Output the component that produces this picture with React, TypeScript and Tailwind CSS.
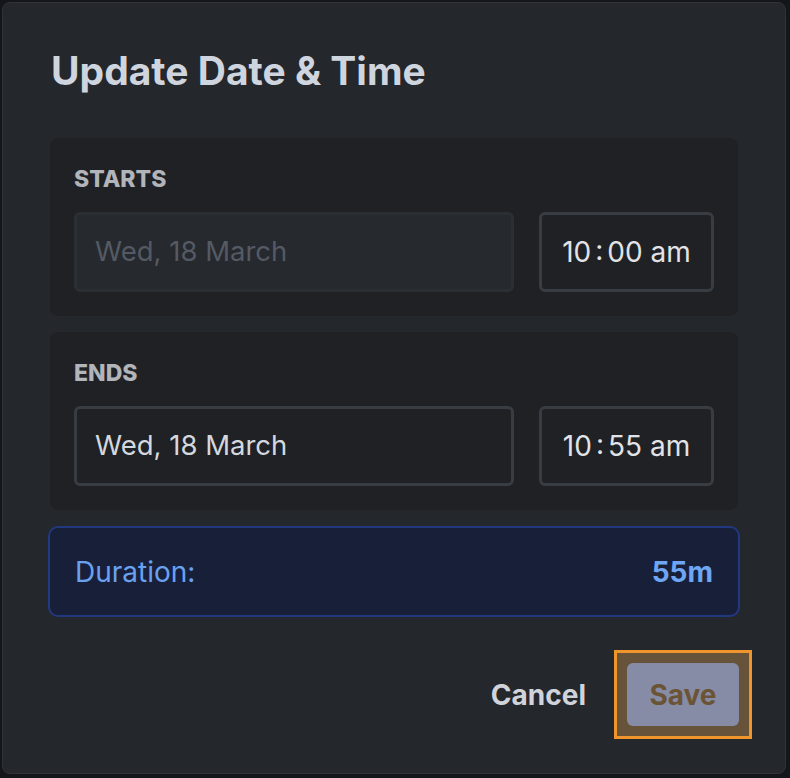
import type { FC } from 'react';

const font = { fontFamily: 'Inter, "Noto Sans", sans-serif' };

const TimeBox: FC<{ h: string; m: string }> = ({ h, m }) => (
  <div className="w-[175px] h-[80px] shrink-0 flex items-center justify-center rounded-[6px] border-[3px] border-[#383c43] bg-[#1f2125] text-[28px] text-[#e1e3e7]">
    <span>{h}</span>
    <span className="mx-[4px] relative -top-[2px]">:</span>
    <span>{m} am</span>
  </div>
);

const Section: FC<{ label: string; date: string; disabled?: boolean; h: string; m: string }> = ({
  label,
  date,
  disabled,
  h,
  m,
}) => (
  <div className="rounded-[8px] bg-[#1f2125] p-6">
    <div className="mt-[3px] mb-[19px] text-[23px] leading-[28px] font-extrabold text-[#b1b4b9]">
      {label}
    </div>
    <div className="flex gap-[25px]">
      {disabled ? (
        <div className="flex-1 h-[80px] flex items-center px-[18px] rounded-[6px] border-[3px] border-[#2b2e33] bg-[#26292e] text-[27.5px] text-[#545a64]">
          {date}
        </div>
      ) : (
        <div className="flex-1 h-[80px] flex items-center px-[18px] rounded-[6px] border-[3px] border-[#383c43] bg-[#1f2125] text-[27.5px] text-[#d4d8de]">
          {date}
        </div>
      )}
      <TimeBox h={h} m={m} />
    </div>
  </div>
);

export default function App() {
  return (
    <div className="min-h-[778px] w-[790px] bg-[#141619] p-[2px]" style={font}>
      <div className="w-[784px] h-[772px] rounded-[8px] border border-[#30333a] bg-[#24272c] px-[47px] pt-[48px] pb-[47px] flex flex-col">
        <h1 className="text-[39px] leading-none font-bold text-[#cfd5de] mb-[48px] ml-[1px]">
          Update Date &amp; Time
        </h1>

        <div className="flex flex-col gap-4">
          <Section label="STARTS" date="Wed, 18 March" disabled h="10" m="00" />
          <Section label="ENDS" date="Wed, 18 March" h="10" m="55" />
          <div className="-mx-[2px] h-[91px] flex items-center justify-between rounded-[10px] border-2 border-[#22387f] bg-[#182039] px-[25px] text-[28px] text-[#6aa1ef]">
            <span>Duration:</span>
            <span className="font-bold text-[#6ea6f4]">55m</span>
          </div>
        </div>

        <div className="mt-auto flex items-center justify-end gap-[41px] -mr-[1px]">
          <button className="text-[28px] font-bold text-[#d0d4da]">Cancel</button>
          <div className="-m-[13px] border-[3px] border-[#f0952b] bg-[#66533a] p-[10px]">
            <button className="w-[112px] h-[63px] rounded-[6px] bg-[#878ca6] text-[28px] font-bold text-[#6b5436]">
              Save
            </button>
          </div>
        </div>
      </div>
    </div>
  );
}
